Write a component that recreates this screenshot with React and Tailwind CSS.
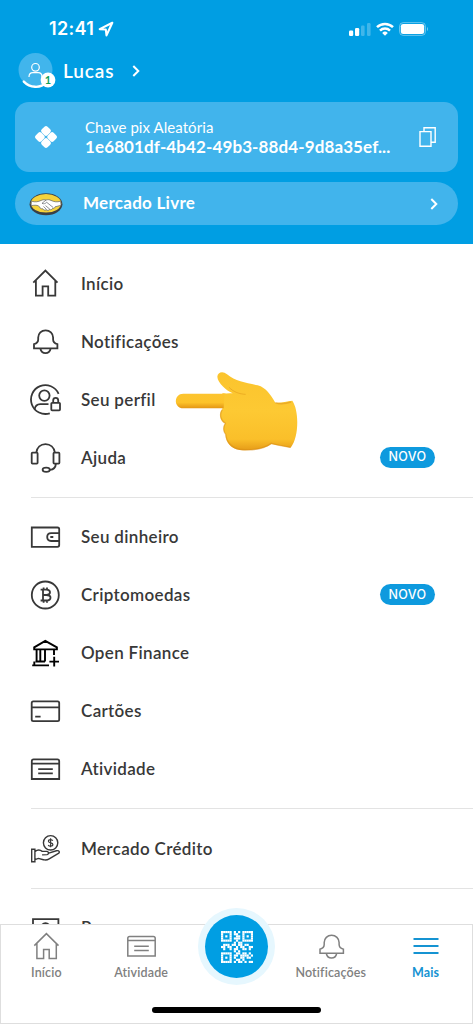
import React from 'react';

// ============================================================================
// Icons
// ============================================================================

function Icon({ children, className = 'text-[#383838]', strokeWidth = 1.8 }) {
    return (
        <svg
            viewBox="0 0 32 32"
            className={`w-8 h-8 shrink-0 ${className}`}
            fill="none"
            stroke="currentColor"
            strokeWidth={strokeWidth}
        >
            {children}
        </svg>
    );
}

function HomeIcon(props) {
    return (
        <Icon {...props}>
            <path d="M4.300 15.600 16.400 3.600l12.100 12M6.900 13.600v15h6.700v-9.200h5.600v9.200h7.100v-15" />
        </Icon>
    );
}

function BellIcon(props) {
    return (
        <Icon {...props}>
            <path d="M5 23.300v-4.100c2.800-.7 4.200-2 4.200-4.600v-2c0-4.200 3.200-7.300 7.400-7.300s7.500 3.100 7.500 7.300v2c0 2.600 1.500 3.900 4.300 4.600v4.100zM11.300 23.500c.7 3 2.600 4.600 5.200 4.600s4.500-1.600 5.200-4.600" />
        </Icon>
    );
}

function ProfileIcon() {
    return (
        <Icon>
            <path d="M29.600 10.800A14.400 14.400 0 1 0 20.800 30.300" />
            <circle cx="15.400" cy="12.600" r="5.200" />
            <path d="M5.600 26.500c.5-3.300 2.500-5.300 5.700-5.300h8.200" />
            <rect x="22.300" y="19.800" width="8.700" height="7.600" rx=".8" />
            <path d="M24.200 19.800v-2.500a2.500 2.500 0 0 1 5 0v2.500" />
        </Icon>
    );
}

function HeadsetIcon() {
    return (
        <Icon>
            <rect x="2.700" y="11.600" width="5.900" height="11" rx=".8" />
            <rect x="24.500" y="11.600" width="5.900" height="11" rx=".8" />
            <path d="M7.300 11.600C8 6.500 11.600 3.200 16.500 3.200s8.600 3.300 9.400 8.400M26.900 22.600c-.2 3.400-2 5.800-6 6.300" />
            <ellipse cx="17.200" cy="28.800" rx="3.600" ry="2.100" />
        </Icon>
    );
}

function WalletIcon() {
    return (
        <Icon>
            <path d="M2.800 6.500h25.700c1 0 1.700.6 1.700 1.600v16c0 1-.7 1.700-1.700 1.700H2.800z" />
            <path d="M30.200 12.200h-8.100c-2.300 0-3.900 1.700-3.900 3.900s1.600 3.900 3.900 3.900h8.100M21.300 16h3" />
        </Icon>
    );
}

function CryptoIcon() {
    return (
        <Icon>
            <circle cx="16.300" cy="16" r="13.500" />
            <path d="M11.600 10.700h5.800c2.300 0 3.600.9 3.600 2.600s-1.300 2.700-3.600 2.700h-3.200M17.400 16c2.700 0 4.100 1 4.100 2.800 0 1.700-1.400 2.700-4.100 2.700h-5.800M14 10.700v10.800M14.600 8.600v2.100M18 8.600v2.100M14.600 21.500v2.200M18 21.500v2.200" />
        </Icon>
    );
}

function BankIcon() {
    return (
        <Icon className="text-black" strokeWidth={1.9}>
            <path d="M5.200 12.400v-2l11.100-6.500 11.600 6.500v2zM7.600 12.600v12M11.300 12.600v12M16 12.600v12M25 12.600v5.500M6.500 24.500H16M3.200 28.400H20M5.300 24.600v3.800M25.200 19.700v9.800M20.400 24.600h9.600" />
        </Icon>
    );
}

function CardIcon() {
    return (
        <Icon>
            <rect x="2.700" y="6.400" width="27.500" height="19.700" rx="1.600" />
            <path d="M2.700 12.300h27.500M6.200 21.600h5.400" />
        </Icon>
    );
}

function ActivityIcon(props) {
    return (
        <Icon {...props}>
            <path d="M2.800 8.200c0-1.100.7-1.800 1.800-1.800h23.800c1.100 0 1.800.7 1.800 1.800V26H2.800zM2.800 10.600h27.400M9.200 16.200h14.600M9.200 20.400h14.600" />
        </Icon>
    );
}

function CreditIcon() {
    return (
        <Icon strokeWidth={1.4}>
            <circle cx="21.600" cy="10.800" r="7.200" />
            <path d="M23.800 8.800c-.4-.8-1.200-1.200-2.200-1.200-1.300 0-2.200.6-2.200 1.600 0 2.300 4.500 1 4.500 3.300 0 1-1 1.600-2.300 1.600-1.100 0-2-.4-2.400-1.200M21.600 6.300v9" strokeWidth="1.150" />
            <path d="M2.700 17.300h3.200v12.400H2.700zM5.900 19.600c2.400-1.900 5.100-2 7.300-.2h4.500c2 0 2.700 2.800.4 3.200l-5 .3M18.900 21.400l8.500-2.600c2.900-.7 4 1.700 1.600 2.900l-8.800 5.200c-2 1.200-3.700 1.400-5.800.8l-5-1.300-3.500 1.300" />
        </Icon>
    );
}

function MoneyIcon() {
    return (
        <Icon>
            <path d="M4 25V7.200h25.400V25z" />
            <circle cx="16.500" cy="15.800" r="4.600" />
        </Icon>
    );
}

function Chevron() {
    return (
        <svg viewBox="0 0 8 12" className="w-2 h-3" fill="none" stroke="currentColor" strokeWidth="2">
            <path d="m1.300 1 5 5-5 5" />
        </svg>
    );
}

function PixIcon() {
    return (
        <svg viewBox="0 0 24 24" className="w-6 h-6" fill="#fff">
            <rect x="7.900" y="1.800" width="8.200" height="8.200" rx="2.200" transform="rotate(45 12 5.900)" />
            <rect x="7.900" y="14" width="8.200" height="8.200" rx="2.200" transform="rotate(45 12 18.100)" />
            <rect x="1.800" y="7.900" width="8.200" height="8.200" rx="2.200" transform="rotate(45 5.900 12)" />
            <rect x="14" y="7.900" width="8.200" height="8.200" rx="2.200" transform="rotate(45 18.100 12)" />
        </svg>
    );
}

function HandshakeLogo() {
    return (
        <svg viewBox="0 0 34 24" className="w-[34px] h-6">
            <ellipse cx="17" cy="12.300" rx="16.400" ry="11" fill="#3a4046" />
            <ellipse cx="17" cy="11.300" rx="15.200" ry="9.300" fill="#f5d33b" />
            <path
                d="M2.500 9.200c3.700 1.200 6.700.6 9.700-.8 1.700-.7 3.400-.9 4.800-.3 1.700-.7 3.400-.5 5 .3 3 1.400 6 2 9.500.8l.6 4.100-6 1.500c-.4 1.300-1.400 1.700-2.400 1.500-.6 1.300-1.900 1.700-3 1.100-.9 1.200-2.500 1.300-3.500.4-1.500.7-2.900.2-3.300-1-1.800.3-3-.5-3.200-1.900-2-2.200-5-1.800-8.600-1.300z"
                fill="#fff"
                stroke="#5c6068"
                strokeWidth=".7"
            />
            <path
                d="m17 8.100-4 3.200c1.800 1 3.300.3 4.700-1l6.500 5.200M16.500 13.600l4.300 3.600M14.500 14.400l3 3.100"
                fill="none"
                stroke="#5c6068"
                strokeWidth=".7"
            />
        </svg>
    );
}

function PointingHand() {
    return (
        <svg viewBox="0 0 450 300" className="w-[150px] h-[100px]">
            <defs>
                <linearGradient id="skin" x1="0" y1="0" x2="0" y2="1">
                    <stop offset="0" stopColor="#fbc42d" />
                    <stop offset=".5" stopColor="#fdc933" />
                    <stop offset=".86" stopColor="#fabf2a" />
                    <stop offset="1" stopColor="#e69c18" />
                </linearGradient>
                <linearGradient id="finger" x1="0" y1="0" x2="0" y2="1">
                    <stop offset="0" stopColor="#fcc42f" />
                    <stop offset=".6" stopColor="#fdc32a" />
                    <stop offset="1" stopColor="#e39514" />
                </linearGradient>
            </defs>
            <path
                d="M172 100 C185 101 195 100 203 100 C184 91 158 69 157 50 C158 36 174 32 186 43 C211 65 244 68 278 76 C304 83 317 106 331 128 C348 129 366 124 382 122 C402 151 403 230 377 263 C356 259 337 256 319 252 C297 269 255 272 224 270 C195 266 181 243 182 223 C173 215 174 198 181 190 C164 184 161 160 172 148 Z"
                fill="url(#skin)"
            />
            <path d="M178 101H55c-29 0-31 43 0 44h121z" fill="url(#finger)" />
            <path
                d="M192 82c14 14 30 20 50 21"
                fill="none"
                stroke="#dd9415"
                strokeWidth="3"
                opacity=".5"
            />
            <path
                d="M172 149c-10 13-5 33 9 41-7 11-6 25 1 33 2 24 21 43 43 45 34 4 70-1 94-18 21 6 36 9 57 12"
                fill="none"
                stroke="#d78b16"
                strokeWidth="4"
                opacity=".5"
            />
            <path
                d="M331 128c12 5 29 4 47-2"
                fill="none"
                stroke="#d9901a"
                strokeWidth="4"
                opacity=".5"
            />
        </svg>
    );
}

const QR_ROWS = [
    '111110101011111',
    '100010110010001',
    '101010011010101',
    '100010111010001',
    '111110010011111',
    '000000101100000',
    '011101101101100',
    '110110010110011',
    '010010110011010',
    '000000101000000',
    '111110011011010',
    '100010110111101',
    '101010100110110',
    '100010011010000',
    '111110101101011'
];

function QrIcon() {
    return (
        <svg viewBox="0 0 15 15" className="w-8 h-8" fill="#fff">
            {QR_ROWS.map((row, y) =>
                row.split('').map((cell, x) =>
                    cell === '1' ? <rect key={`${x}-${y}`} x={x} y={y} width="1.02" height="1.02" /> : null
                )
            )}
        </svg>
    );
}

// ============================================================================
// Header
// ============================================================================

function StatusBar() {
    return (
        <div className="flex h-[58px] items-center justify-between pl-[49px] pr-[44px]">
            <div className="flex items-center gap-[4px]">
                <span className="font-['Inter'] text-[18px] font-semibold leading-none tracking-[0.3px]">12:41</span>
                <svg viewBox="0 0 16 16" className="w-4 h-4" fill="none" stroke="#fff" strokeWidth="2.1" strokeLinejoin="round">
                    <path d="M14.300 1.700 1.700 8.100l6.100.4.700 5.900z" />
                </svg>
            </div>
            <div className="flex items-center gap-[5px]">
                <svg viewBox="0 0 22 14" className="w-[22px] h-3.5" fill="#fff">
                    <rect x="0" y="8.500" width="4.200" height="5.500" rx="1.200" />
                    <rect x="6" y="6" width="4.200" height="8" rx="1.200" />
                    <rect x="12" y="3.500" width="3.600" height="10.500" rx="1.200" opacity=".25" />
                    <rect x="18" y="1" width="3.600" height="13" rx="1.200" opacity=".25" />
                </svg>
                <svg viewBox="0 0 18 14" className="w-[18px] h-3.5" fill="none" stroke="#fff" strokeWidth="2.5">
                    <path d="M1 5.200a11.500 11.500 0 0 1 16 0M4 8.600a7.200 7.200 0 0 1 10 0" />
                    <path d="M9 13.700 6.200 10.900a4 4 0 0 1 5.600 0z" fill="#fff" stroke="none" />
                </svg>
                <svg viewBox="0 0 30 14" className="w-[30px] h-3.5">
                    <rect x=".5" y=".6" width="26" height="12.800" rx="3.800" fill="none" stroke="#fff" opacity=".4" />
                    <rect x="1.800" y="1.900" width="23.400" height="10.200" rx="2.400" fill="#fff" />
                    <path d="M28 5v4c1.400-.6 1.400-3.400 0-4z" fill="#fff" opacity=".45" />
                </svg>
            </div>
        </div>
    );
}

function Avatar() {
    return (
        <svg viewBox="0 0 38 38" className="w-[38px] h-[38px]">
            <circle cx="17.500" cy="18" r="17" fill="#41b5ec" />
            <circle cx="17.500" cy="15.300" r="3.800" fill="none" stroke="#fff" strokeWidth="1.200" />
            <path d="M11 25c0-3 1.300-4.300 3.800-4.300h5.400c2.500 0 3.800 1.300 3.800 4.300" fill="none" stroke="#fff" strokeWidth="1.200" />
            <path d="M5.800 29.600c6 6.300 16.300 7.300 23 .8" fill="none" stroke="#fff" strokeWidth="2.400" strokeLinecap="round" />
            <circle cx="30" cy="28" r="7.400" fill="#fff" />
            <text x="30" y="31.900" textAnchor="middle" className="font-['Lato'] text-[11px] font-bold" fill="#0f9f5a">
                1
            </text>
        </svg>
    );
}

function Header() {
    return (
        <header className="h-[244px] bg-[#009ee3] text-white">
            <StatusBar />

            <div className="flex h-[26px] items-center pl-[18px]">
                <Avatar />
                <span className="ml-[7px] w-[52px] whitespace-nowrap pb-[2px] text-[19px] font-semibold leading-none tracking-[0.9px]">Lucas</span>
                <span className="ml-[17px]"><Chevron /></span>
            </div>

            <div className="mx-[15px] mt-[18px] flex h-[70px] items-center rounded-[14px] bg-[#41b4ec] pl-[19px] pr-[20px]">
                <PixIcon />
                <div className="ml-[27px] flex-1 whitespace-nowrap">
                    <div className="text-[15px] leading-[19px] tracking-[0.07px]">Chave pix Aleatória</div>
                    <div className="text-[17px] font-bold leading-[20px] tracking-[0.11px]">1e6801df-4b42-49b3-88d4-9d8a35ef...</div>
                </div>
                <svg viewBox="0 0 20 22" className="w-5 h-[22px]" fill="none" stroke="#fff" strokeWidth="1.400">
                    <path d="M2 5.600h11v14.700H2zM6 5.600V1.700h11.200v14.600H13" />
                </svg>
            </div>

            <div className="mx-[15px] mt-[10px] flex h-[43px] items-center rounded-full bg-[#41b4ec] pl-[14px] pr-[20px]">
                <HandshakeLogo />
                <span className="ml-5 flex-1 pb-[2px] text-[17px] font-bold leading-none tracking-[0.27px]">Mercado Livre</span>
                <Chevron />
            </div>
        </header>
    );
}

// ============================================================================
// Menu
// ============================================================================

const MENU_GROUPS = [
    [
        { label: 'Início', icon: HomeIcon },
        { label: 'Notificações', icon: BellIcon },
        { label: 'Seu perfil', icon: ProfileIcon },
        { label: 'Ajuda', icon: HeadsetIcon, isNew: true }
    ],
    [
        { label: 'Seu dinheiro', icon: WalletIcon },
        { label: 'Criptomoedas', icon: CryptoIcon, isNew: true },
        { label: 'Open Finance', icon: BankIcon },
        { label: 'Cartões', icon: CardIcon },
        { label: 'Atividade', icon: ActivityIcon }
    ],
    [{ label: 'Mercado Crédito', icon: CreditIcon }],
    [{ label: 'Pagar', icon: MoneyIcon }]
];

function MenuItem({ label, icon: ItemIcon, isNew }) {
    return (
        <li className="flex h-[58px] items-center pl-[29px] pr-[38px]">
            <ItemIcon />
            <span className="ml-5 flex-1 text-[17px] font-semibold leading-none tracking-[0.33px] text-[#383838]">{label}</span>
            {isNew && (
                <span className="flex h-[21px] w-[55px] items-center justify-center rounded-full bg-[#0e9ade] pt-px font-['Inter'] text-[12.5px] font-medium tracking-[0.4px] text-white">
                    NOVO
                </span>
            )}
        </li>
    );
}

function Menu() {
    return (
        <main className="relative h-[680px] overflow-hidden bg-white pt-[10px]">
            {MENU_GROUPS.map((group, index) => (
                <section key={index}>
                    {index > 0 && <div className="mb-[10px] ml-[31px] mt-[10.6px] h-px bg-[#e3e3e3]" />}
                    <ul>
                        {group.map(item => (
                            <MenuItem key={item.label} {...item} />
                        ))}
                    </ul>
                </section>
            ))}

            {/* Sticker over the "Seu perfil" row */}
            <div className="absolute left-[165px] top-[116px]">
                <PointingHand />
            </div>
        </main>
    );
}

// ============================================================================
// Bottom navigation
// ============================================================================

function NavItem({ label, children, active = false }) {
    return (
        <div className={`flex flex-col items-center ${active ? 'text-[#1593d2]' : 'text-[#808080]'}`}>
            {children}
            <span className={`mt-[3px] text-[12.5px] leading-[16px] tracking-[0.15px] ${active ? 'font-bold' : 'font-semibold'}`}>{label}</span>
        </div>
    );
}

function BottomNav() {
    return (
        <nav className="relative h-[100px] border border-[#dedede] bg-white">
            <div className="-ml-[2px] -mr-px grid grid-cols-5 pt-[5px]">
                <NavItem label="Início">
                    <HomeIcon className="" strokeWidth={1.5} />
                </NavItem>
                <NavItem label="Atividade">
                    <ActivityIcon className="" strokeWidth={1.5} />
                </NavItem>
                <div />
                <NavItem label="Notificações">
                    <BellIcon className="" strokeWidth={1.5} />
                </NavItem>
                <NavItem label="Mais" active>
                    <Icon className="" strokeWidth={1.9}>
                        <path d="M3.500 9h25M3.500 16h25M3.500 23h25" />
                    </Icon>
                </NavItem>
            </div>

            {/* QR button rises above the bar */}
            <div className="absolute left-[197px] top-[-17px] flex h-[77px] w-[77px] items-center justify-center rounded-full bg-[#e6f7fe]">
                <div className="flex h-[63px] w-[63px] items-center justify-center rounded-full bg-[#009ee3]">
                    <QrIcon />
                </div>
            </div>

            <div className="mx-auto mt-[26px] h-[6px] w-[169px] rounded-full bg-black" />
        </nav>
    );
}

export default function App() {
    return (
        <div className="h-[1024px] w-[473px] overflow-hidden bg-white font-['Lato','Liberation_Sans',sans-serif]">
            <Header />
            <Menu />
            <BottomNav />
        </div>
    );
}
